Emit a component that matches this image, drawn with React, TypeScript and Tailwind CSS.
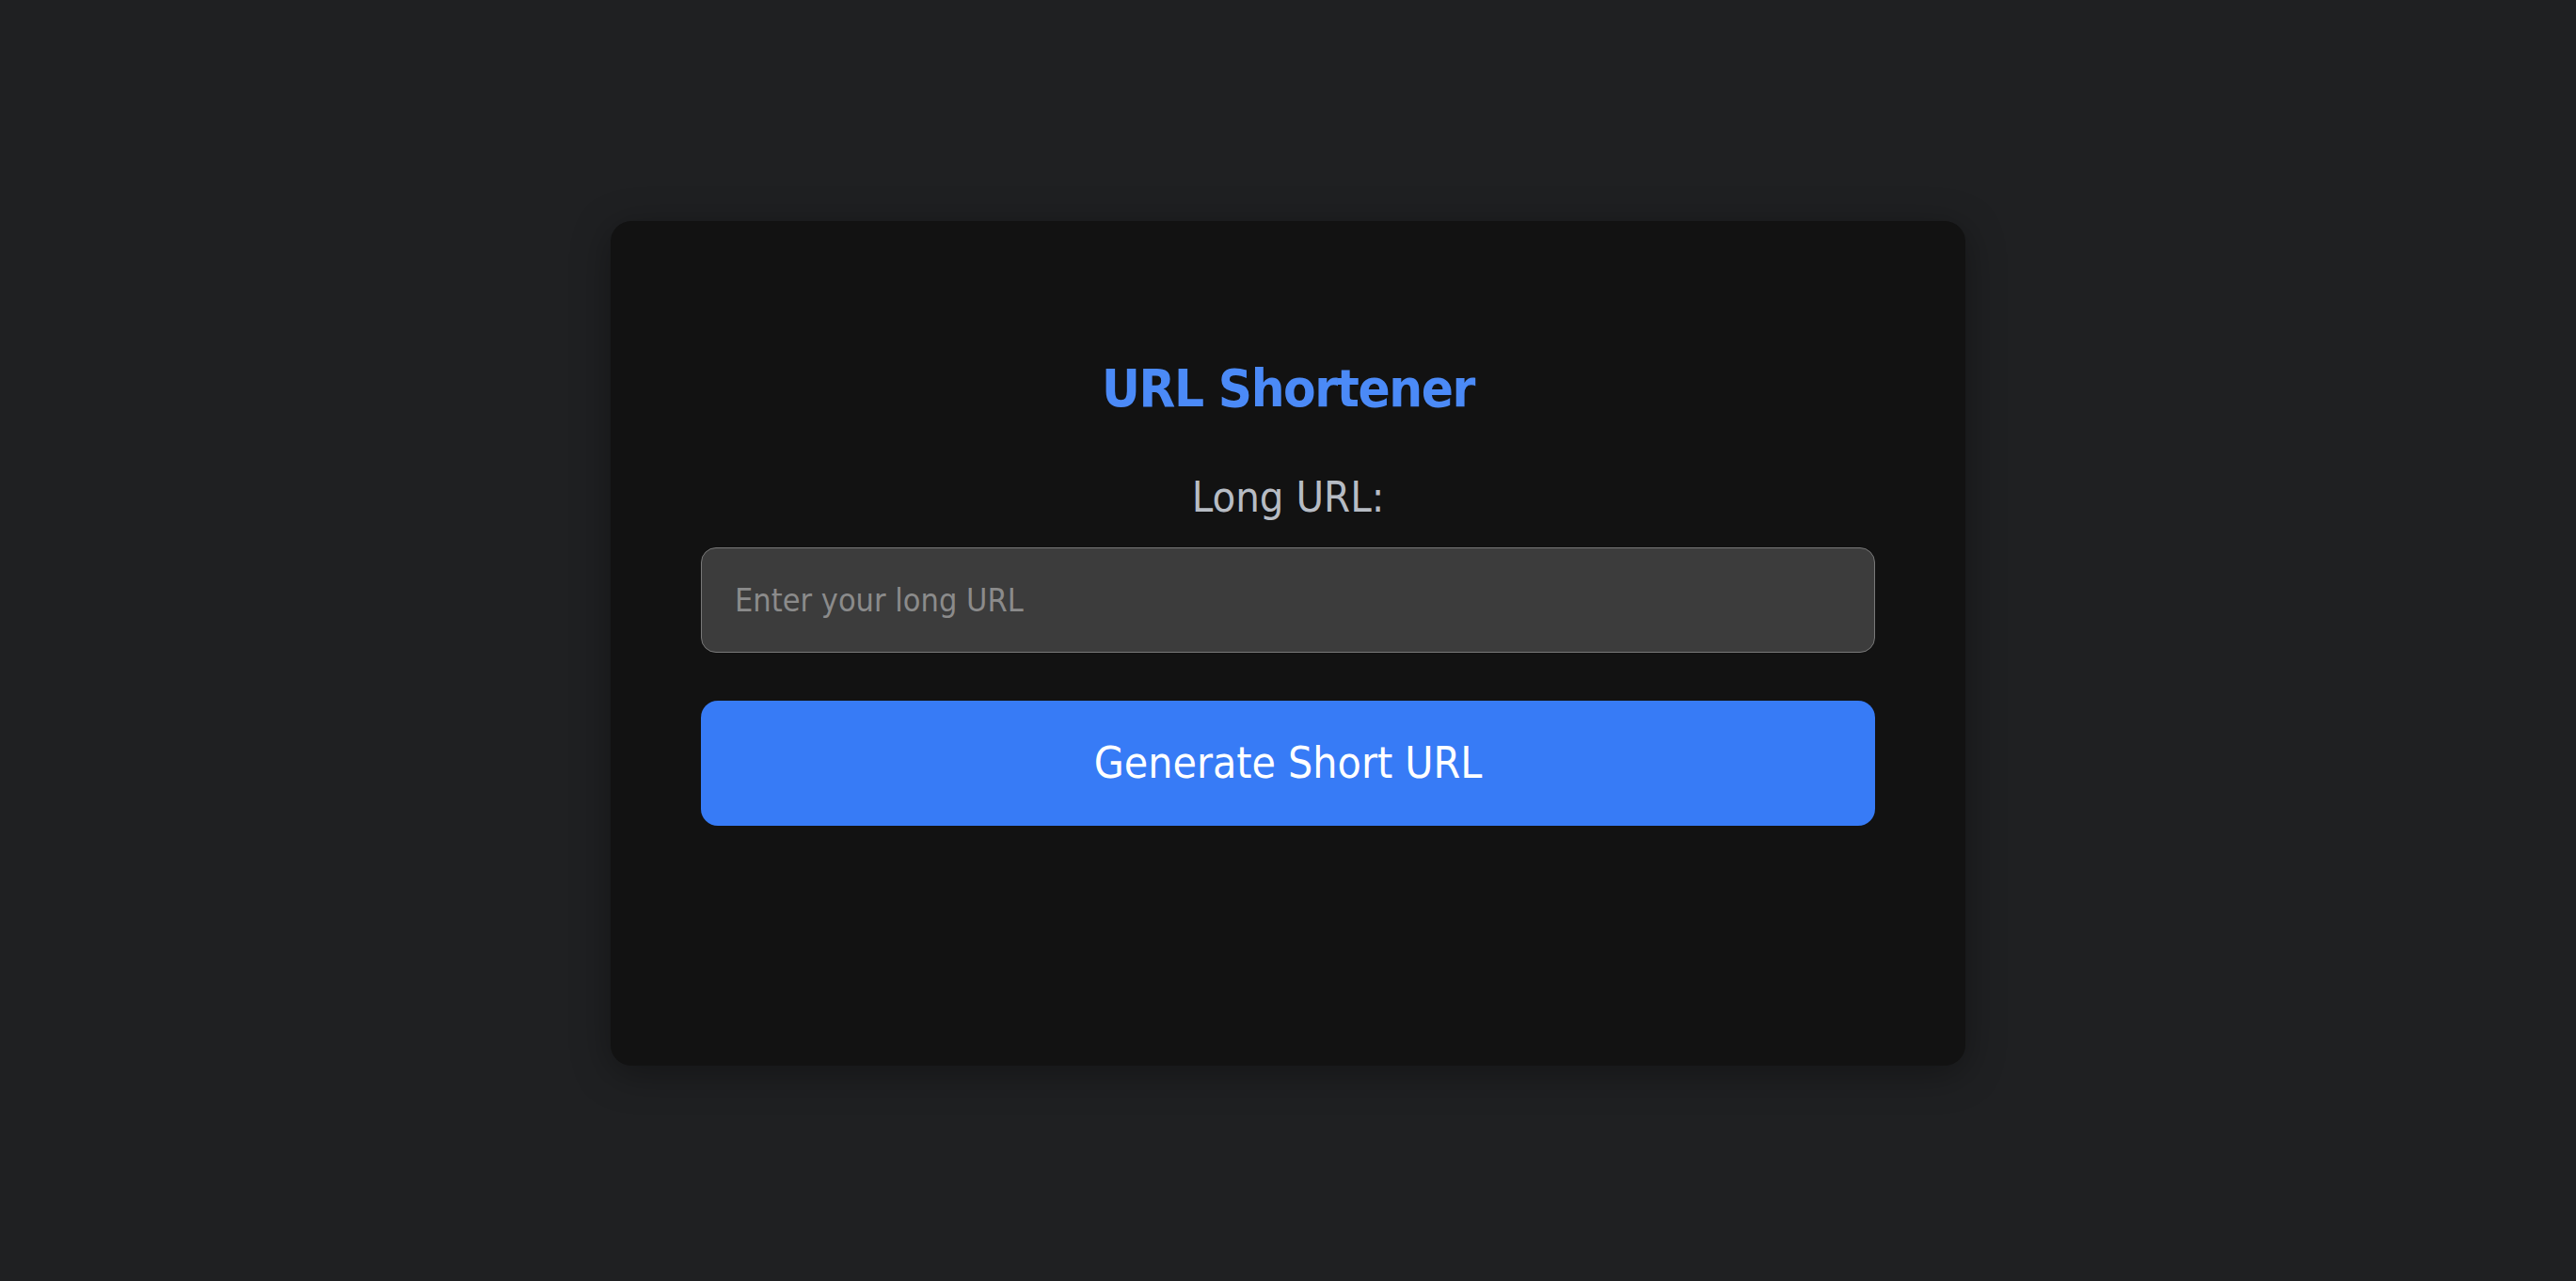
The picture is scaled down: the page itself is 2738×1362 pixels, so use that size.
export default function App() {
  return (
    <div className="min-h-screen w-full bg-[#1f2022] flex items-center justify-center font-['DejaVu_Sans_Condensed','DejaVu_Sans',sans-serif]">
      {/* Card */}
      <div className="mt-[5px] w-[1440px] h-[898px] bg-[#121212] rounded-[22px] shadow-[0_8px_40px_rgba(0,0,0,0.35)] px-[96px] pt-[150px] flex flex-col items-center">
        <h1 className="text-[56px] leading-none font-bold tracking-[-1.4px] text-[#4b8af7]">URL Shortener</h1>

        <label htmlFor="long-url" className="mt-[65px] text-[45px] leading-none text-[#b7bcc4]">
          Long URL:
        </label>

        <input
          id="long-url"
          type="text"
          placeholder="Enter your long URL"
          className="mt-[31px] w-full h-[112px] bg-[#3c3c3c] border border-[#787878] rounded-[16px] px-[35px] text-[34px] text-white placeholder:text-[#8b8b8b] outline-none"
        />

        <button className="mt-[51px] w-full h-[133px] bg-[#377bf6] rounded-[18px] text-[46px] text-white">
          Generate Short URL
        </button>
      </div>
    </div>
  );
}
